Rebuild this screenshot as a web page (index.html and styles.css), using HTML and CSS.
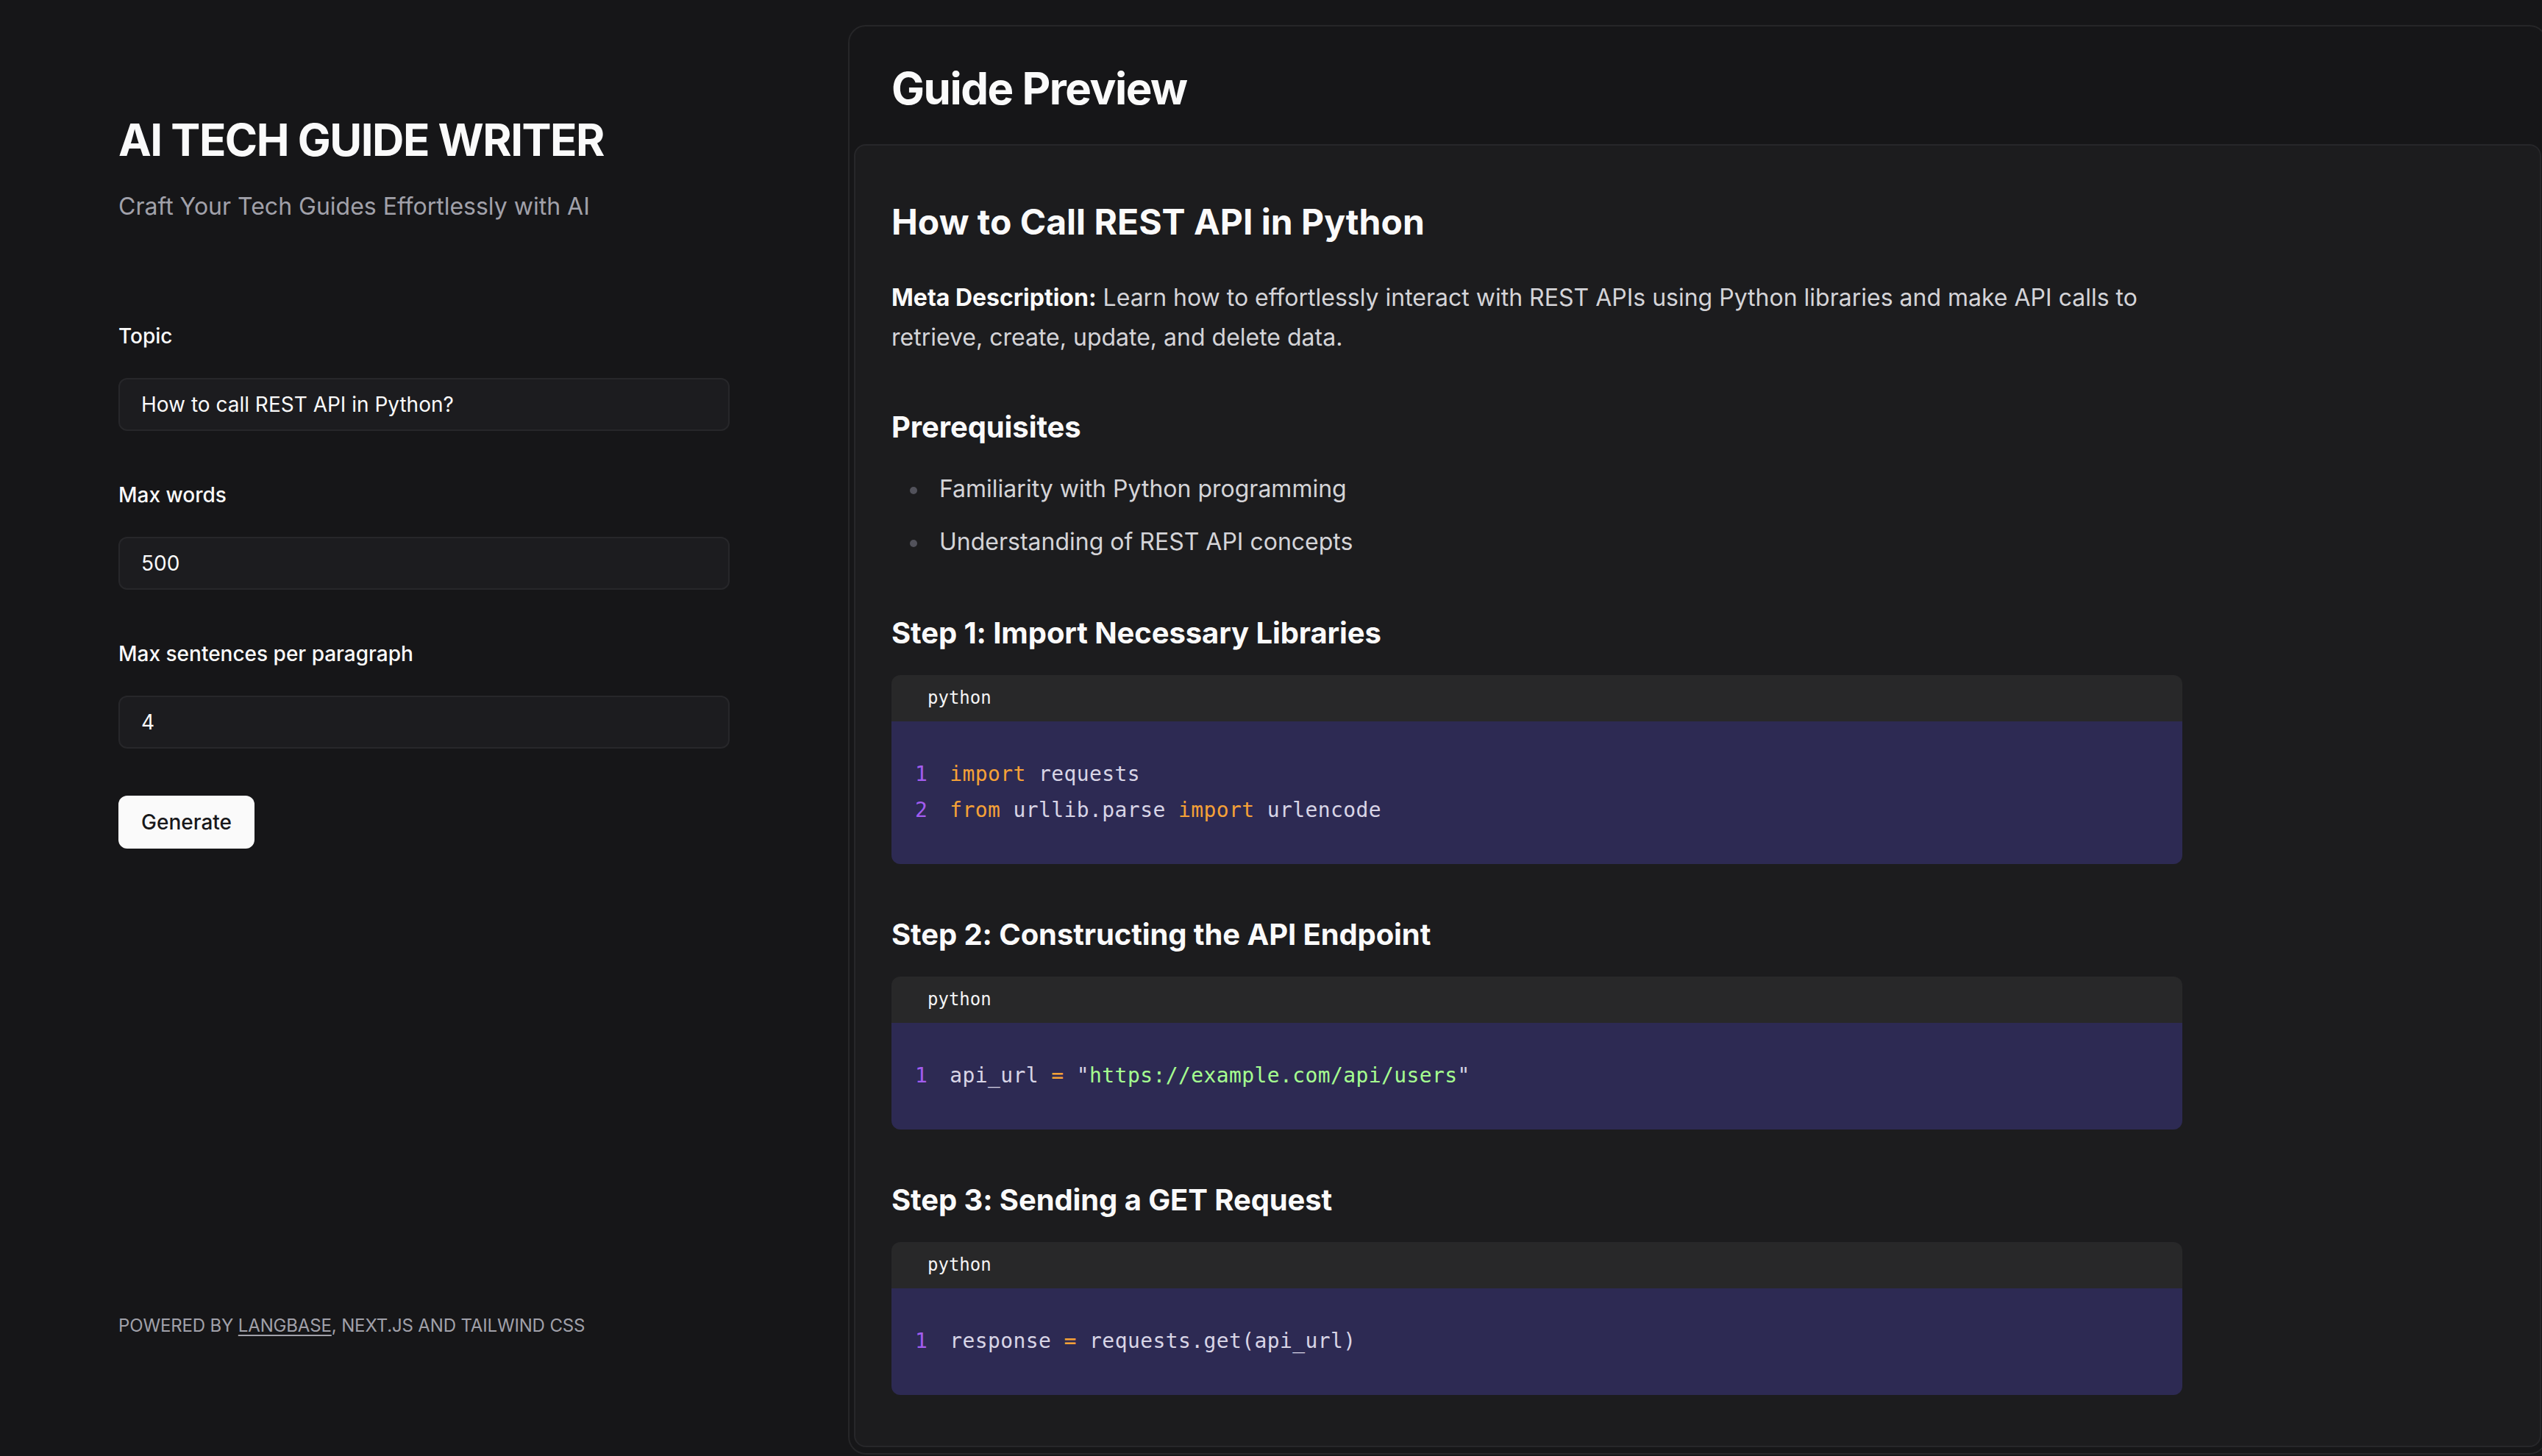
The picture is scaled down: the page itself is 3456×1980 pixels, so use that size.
FILE: index.html
```html
<!DOCTYPE html>
<html lang="en">
<head>
<meta charset="utf-8">
<title>AI Tech Guide Writer</title>
<link rel="stylesheet" href="styles.css">
</head>
<body>
<div class="layout">
  <aside class="sidebar">
    <header class="brand">
      <h1 class="brand-title">AI TECH GUIDE WRITER</h1>
      <p class="brand-sub">Craft Your Tech Guides Effortlessly with AI</p>
    </header>
    <form class="form">
      <div class="field">
        <label class="label" for="topic">Topic</label>
        <input class="input" id="topic" type="text" value="How to call REST API in Python?">
      </div>
      <div class="field">
        <label class="label" for="words">Max words</label>
        <input class="input" id="words" type="text" value="500">
      </div>
      <div class="field">
        <label class="label" for="sentences">Max sentences per paragraph</label>
        <input class="input" id="sentences" type="text" value="4">
      </div>
      <button class="btn" type="button">Generate</button>
    </form>
    <footer class="footer">POWERED BY <a href="#">LANGBASE</a>, NEXT.JS AND TAILWIND CSS</footer>
  </aside>
  <main class="preview">
    <div class="preview-head">
      <h2 class="preview-title">Guide Preview</h2>
    </div>
    <article class="doc">
      <div class="prose">
        <h1>How to Call REST API in Python</h1>
        <p class="meta"><strong>Meta Description:</strong> Learn how to effortlessly interact with REST APIs using Python libraries and make API calls to retrieve, create, update, and delete data.</p>
        <h2>Prerequisites</h2>
        <ul>
          <li>Familiarity with Python programming</li>
          <li>Understanding of REST API concepts</li>
        </ul>
        <h2>Step 1: Import Necessary Libraries</h2>
        <div class="code">
          <div class="code-head">python</div>
          <div class="code-body">
            <div class="line"><span class="ln">1</span><span class="kw">import</span> requests</div>
            <div class="line"><span class="ln">2</span><span class="kw">from</span> urllib.parse <span class="kw">import</span> urlencode</div>
          </div>
        </div>
        <h2>Step 2: Constructing the API Endpoint</h2>
        <div class="code">
          <div class="code-head">python</div>
          <div class="code-body">
            <div class="line"><span class="ln">1</span>api_url <span class="op">=</span> "<span class="str">https://example.com/api/users</span>"</div>
          </div>
        </div>
        <h2>Step 3: Sending a GET Request</h2>
        <div class="code">
          <div class="code-head">python</div>
          <div class="code-body">
            <div class="line"><span class="ln">1</span>response <span class="op">=</span> requests.get(api_url)</div>
          </div>
        </div>
      </div>
    </article>
  </main>
</div>
</body>
</html>
```

FILE: styles.css
```css
* {
  box-sizing: border-box;
  margin: 0;
  padding: 0;
}

html,
body {
  height: 100%;
  overflow: hidden;
}

body {
  background: #161618;
  color: #fafafa;
  font-family: Inter, "Noto Sans", sans-serif;
}

.layout {
  display: grid;
  grid-template-columns: 1153px 2310px;
  height: 1980px;
}

/* ---------- sidebar ---------- */
.sidebar {
  display: flex;
  flex-direction: column;
  padding: 154px 0 161px 161px;
}

.brand-title {
  font-size: 60px;
  line-height: 72px;
  font-weight: 700;
  letter-spacing: -1.5px;
  color: #fafafa;
}

.brand-sub {
  margin-top: 31px;
  font-size: 32px;
  line-height: 48px;
  color: #a1a1aa;
}

.form {
  margin-top: 138px;
  width: 831px;
}

.field + .field {
  margin-top: 73px;
}

.label {
  display: block;
  font-size: 28px;
  line-height: 28px;
  font-weight: 500;
  color: #fafafa;
}

.input {
  display: block;
  margin-top: 43px;
  width: 831px;
  height: 72px;
  padding: 0 29px;
  border: 2px solid #27272a;
  border-radius: 12px;
  background: #1c1c1f;
  color: #fafafa;
  font-family: inherit;
  font-size: 28px;
  outline: none;
}

.btn {
  display: block;
  margin-top: 64px;
  height: 72px;
  padding: 0 31px;
  border: none;
  border-radius: 12px;
  background: #fafafa;
  color: #18181b;
  font-family: inherit;
  font-size: 28px;
  font-weight: 500;
}

.footer {
  margin-top: auto;
  font-size: 24px;
  line-height: 32px;
  letter-spacing: -0.15px;
  color: #a1a1aa;
}

.footer a {
  color: inherit;
  text-decoration: underline;
  text-underline-offset: 4px;
}

/* ---------- preview ---------- */
.preview {
  margin-top: 34px;
  height: 1944px;
  display: flex;
  flex-direction: column;
  border: 2px solid #262628;
  border-radius: 24px;
}

.preview-head {
  padding: 48px 57px 40px;
}

.preview-title {
  font-size: 60px;
  line-height: 72px;
  font-weight: 700;
  letter-spacing: -1.5px;
  color: #fafafa;
}

.doc {
  flex: 1;
  margin: 0 6px 8px;
  padding: 72px 49px 67px;
  border: 2px solid #27272a;
  border-radius: 16px;
  background: #1c1c1e;
  overflow: hidden;
}

.prose {
  max-width: 1755px;
  font-size: 32px;
  line-height: 54px;
  color: #d4d4d8;
}

.prose h1 {
  font-size: 48px;
  line-height: 64px;
  font-weight: 700;
  color: #fafafa;
}

.prose .meta {
  margin-top: 44px;
}

.prose strong {
  font-weight: 700;
  color: #fafafa;
}

.prose h2 {
  margin-top: 68px;
  margin-bottom: 29px;
  font-size: 40px;
  line-height: 56px;
  font-weight: 700;
  letter-spacing: -0.1px;
  color: #fafafa;
}

.prose .meta + h2 {
  margin-top: 67px;
}

.prose ul + h2 {
  margin-top: 69px;
}

.prose ul {
  list-style: none;
}

.prose li {
  display: flex;
  align-items: center;
}

.prose li + li {
  margin-top: 18px;
}

.prose li::before {
  content: "";
  flex: none;
  width: 10px;
  height: 10px;
  margin: 3px 30px 0 25px;
  border-radius: 50%;
  background: #52525b;
}

.code {
  border-radius: 12px;
  overflow: hidden;
}

.code-head {
  height: 63px;
  padding-left: 49px;
  background: #282829;
  font-family: "DejaVu Sans Mono", "Liberation Mono", monospace;
  font-size: 24px;
  line-height: 63px;
  color: #f4f4f5;
}

.code-body {
  padding: 47px 32px 49px;
  background: #2d2a53;
  font-family: "DejaVu Sans Mono", "Liberation Mono", monospace;
  font-size: 28px;
  line-height: 49px;
  letter-spacing: 0.4px;
  color: #d8d5e6;
}

.line {
  white-space: pre;
}

.ln {
  display: inline-block;
  margin-right: 30px;
  color: #a25cf0;
}

.kw,
.op {
  color: #f5a137;
}

.str {
  color: #a5ff90;
}
```
